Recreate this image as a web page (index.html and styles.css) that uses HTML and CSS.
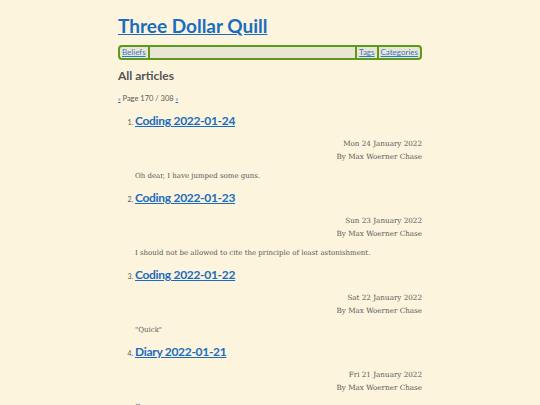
FILE: index.html
```
<!DOCTYPE html>
<html>
<head>
<meta charset="utf-8">
<link rel="stylesheet" href="styles.css">
</head>
<body>
<div class="page">
  <h1 class="site-title"><a href="#">Three Dollar Quill</a></h1>
  <nav class="nav">
    <div class="nav-group"><a class="nav-link" href="#">Beliefs</a></div>
    <div class="nav-spacer"></div>
    <div class="nav-group"><a class="nav-link" href="#">Tags</a><a class="nav-link" href="#">Categories</a></div>
  </nav>
  <h2 class="section-title">All articles</h2>
  <p class="pager"><a href="#">«</a> Page 170 / 308 <a href="#">»</a></p>
  <ol class="articles">
    <li class="article">
      <h3 class="article-title"><a href="#">Coding 2022-01-24</a></h3>
      <div class="meta"><div>Mon 24 January 2022</div><div>By Max Woerner Chase</div></div>
      <p class="excerpt">Oh dear, I have jumped some guns.</p>
    </li>
    <li class="article">
      <h3 class="article-title"><a href="#">Coding 2022-01-23</a></h3>
      <div class="meta"><div>Sun 23 January 2022</div><div>By Max Woerner Chase</div></div>
      <p class="excerpt">I should not be allowed to cite the principle of least astonishment.</p>
    </li>
    <li class="article">
      <h3 class="article-title"><a href="#">Coding 2022-01-22</a></h3>
      <div class="meta"><div>Sat 22 January 2022</div><div>By Max Woerner Chase</div></div>
      <p class="excerpt">"Quick"</p>
    </li>
    <li class="article">
      <h3 class="article-title"><a href="#">Diary 2022-01-21</a></h3>
      <div class="meta"><div>Fri 21 January 2022</div><div>By Max Woerner Chase</div></div>
      <p class="excerpt">Cw.</p>
    </li>
  </ol>
</div>
</body>
</html>
```
FILE: styles.css
```
html, body {
  margin: 0;
  padding: 0;
  background: #fcf4dc;
}
body {
  font-family: "DejaVu Serif", "Liberation Serif", serif;
  color: #5a5a5a;
}
a { color: #1a6cc0; }
.page {
  width: 304px;
  margin: 0 auto;
  padding-top: 15px;
}
.site-title {
  margin: 0;
  font-family: Lato, "Open Sans", sans-serif;
  font-size: 19px;
  line-height: 22px;
  font-weight: 700;
}
.nav {
  margin-top: 8px;
  height: 11px;
  display: flex;
  border: 2px solid #5c9a1c;
  border-radius: 4px;
  background: #ebe5d3;
  font-family: Lato, "Open Sans", sans-serif;
  font-size: 8px;
  line-height: 11px;
}
.nav-group { display: flex; }
.nav-spacer { flex: 1; }
.nav-link {
  padding: 0 2px;
  color: #2f7ad0;
}
.nav-group:first-child .nav-link {
  border-right: 2px solid #5c9a1c;
}
.nav-group:last-child .nav-link {
  border-left: 2px solid #5c9a1c;
}
.section-title {
  margin: 8px 0 0;
  font-family: Lato, "Open Sans", sans-serif;
  font-size: 12px;
  line-height: 16px;
  font-weight: 700;
  color: #555;
}
.pager {
  margin: 9px 0 0;
  font-size: 7.5px;
  line-height: 12px;
  font-family: Lato, "Open Sans", sans-serif;
}
.pager a { font-size: 6px; }
.articles {
  margin: 8px 0 0;
  padding-left: 17px;
}
.article { margin-bottom: 8px; }
.article::marker {
  font-size: 7px;
  font-family: Lato, sans-serif;
}
.article-title {
  margin: 0;
  font-family: Lato, "Open Sans", sans-serif;
  font-size: 12px;
  line-height: 16px;
  font-weight: 700;
  letter-spacing: -0.3px;
}
.meta {
  margin-top: 8px;
  text-align: right;
  font-size: 7.2px;
  line-height: 13px;
}
.excerpt {
  margin: 7px 0 0;
  font-size: 7px;
  line-height: 12px;
}
```
